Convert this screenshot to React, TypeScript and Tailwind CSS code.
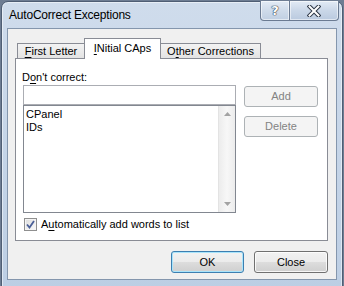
import React from "react";

const CaptionButtons = () => (
  <div className="mr-[3px] -mt-[1px] flex h-[20px]">
    <div className="flex w-[30px] items-center justify-center rounded-bl-[4px] border border-t-0 border-[#6b7b92] bg-gradient-to-b from-[#e3ebf5] via-[#cfdbea] to-[#c0cfe2] shadow-[inset_0_0_0_1px_rgba(255,255,255,0.55)]">
      <span className="font-['DejaVu_Sans',sans-serif] text-[13px] font-bold leading-none text-white [text-shadow:0_0_1px_#2b3544,0_0_1px_#2b3544,0_0_1px_#2b3544]">
        ?
      </span>
    </div>
    <div className="-ml-[1px] flex w-[50px] items-center justify-center rounded-br-[4px] border border-t-0 border-[#6b7b92] bg-gradient-to-b from-[#e3ebf5] via-[#cad7e8] to-[#bacadf] shadow-[inset_0_0_0_1px_rgba(255,255,255,0.55)]">
      <svg width="14" height="12" viewBox="0 0 14 12">
        <path
          d="M2.5 1.5 L11.5 10.5 M11.5 1.5 L2.5 10.5"
          stroke="#2b3544"
          strokeWidth="4"
          strokeLinecap="square"
        />
        <path
          d="M2.5 1.5 L11.5 10.5 M11.5 1.5 L2.5 10.5"
          stroke="#ffffff"
          strokeWidth="2"
          strokeLinecap="square"
        />
      </svg>
    </div>
  </div>
);

const Tab = ({
  label,
  width,
  selected,
}: {
  label: React.ReactNode;
  width: string;
  selected?: boolean;
}) =>
  selected ? (
    <div
      className={`relative z-10 -mb-[1px] -ml-[1px] flex h-[21px] items-start justify-center border border-b-0 border-[#898c95] bg-white pt-[2px] ${width}`}
    >
      {label}
    </div>
  ) : (
    <div
      className={`-ml-[1px] flex h-[15px] items-start justify-center border border-b-0 border-[#898c95] bg-gradient-to-b from-[#f3f3f3] to-[#e3e3e3] first:ml-0 ${width}`}
    >
      {label}
    </div>
  );

const WinButton = ({
  children,
  width,
  disabled,
  isDefault,
}: {
  children: React.ReactNode;
  width: string;
  disabled?: boolean;
  isDefault?: boolean;
}) => {
  if (disabled) {
    return (
      <div
        className={`flex h-[21px] items-center justify-center rounded-[3px] border border-[#adb2b5] bg-[#f4f4f4] text-[#838383] ${width}`}
      >
        {children}
      </div>
    );
  }
  return (
    <div
      className={`flex h-[22px] items-center justify-center rounded-[3px] border bg-[linear-gradient(#f2f2f2_0%,#ebebeb_50%,#dddddd_50%,#cfcfcf_100%)] ${
        isDefault
          ? "border-[#3c7fb1] shadow-[inset_0_0_0_1px_#a9e4fb]"
          : "border-[#707070] shadow-[inset_0_0_0_1px_rgba(255,255,255,0.8)]"
      } ${width}`}
    >
      {children}
    </div>
  );
};

export default function App() {
  return (
    <div className="h-[286px] w-[344px] overflow-hidden bg-[#6e7d93] font-['Liberation_Sans',sans-serif] text-[12px] leading-[15px] text-black">
      <div className="ml-[1px] mt-[1px] h-[292px] w-[342px] rounded-t-[7px] border border-[#4f5e74] bg-gradient-to-b from-[#cfdcec] to-[#bccee4] shadow-[inset_0_0_0_1px_rgba(255,255,255,0.5)]">
        {/* title bar */}
        <div className="flex h-[26px] items-start justify-between">
          <div className="pl-[7px] pt-[6px] text-[12px] tracking-[-0.2px]">AutoCorrect Exceptions</div>
          <CaptionButtons />
        </div>

        {/* client area */}
        <div className="ml-[5px] h-[252px] w-[330px] border border-[#8496ad] bg-[#f0f0f0] text-[11px]">
          {/* tabs */}
          <div className="ml-[9px] mt-[9px] flex h-[20px] items-end">
            <Tab
              width="w-[68px]"
              label={
                <span>
                  <span className="underline underline-offset-2">F</span>irst Letter
                </span>
              }
            />
            <Tab
              selected
              width="w-[77px]"
              label={
                <span>
                  <span className="underline underline-offset-2">I</span>Nitial CAps
                </span>
              }
            />
            <Tab
              width="w-[101px]"
              label={
                <span>
                  O<span className="underline underline-offset-2">t</span>her Corrections
                </span>
              }
            />
          </div>

          {/* tab panel */}
          <div className="ml-[7px] h-[183px] w-[313px] border border-[#898c95] bg-white">
            <div className="pl-[6px] pt-[11px]">
              D<span className="underline underline-offset-2">o</span>n't correct:
            </div>
            <div className="flex gap-[8px] pl-[7px]">
              <div className="flex w-[213px] flex-col">
                <div className="h-[20px] border border-[#abadb3] bg-white" />
                <div className="flex h-[108px] border border-[#828790] bg-white">
                  <div className="flex-1 px-[2px] pt-[2px] leading-[13px]">
                    <div>CPanel</div>
                    <div>IDs</div>
                  </div>
                  <div className="flex w-[17px] flex-col items-center justify-between border-l border-[#e3e3e3] bg-gradient-to-r from-[#ececec] via-[#f7f7f7] to-[#ececec] py-[6px]">
                    <svg width="7" height="4" viewBox="0 0 7 4">
                      <path d="M3.5 0 L7 4 L0 4 Z" fill="#a3a3a3" />
                    </svg>
                    <svg width="7" height="4" viewBox="0 0 7 4">
                      <path d="M0 0 L7 0 L3.5 4 Z" fill="#a3a3a3" />
                    </svg>
                  </div>
                </div>
              </div>
              <div className="mt-[1px] flex flex-col gap-[9px]">
                <WinButton disabled width="w-[74px]">
                  Add
                </WinButton>
                <WinButton disabled width="w-[74px]">
                  Delete
                </WinButton>
              </div>
            </div>
            <div className="mt-[4px] flex items-center gap-[4px] pl-[8px]">
              <div className="flex h-[13px] w-[13px] items-center justify-center border border-[#8f8f8f] bg-gradient-to-br from-[#dcdcdc] to-[#fbfbfb] shadow-[inset_0_0_0_1px_#f4f4f4]">
                <svg width="9" height="9" viewBox="0 0 9 9">
                  <path
                    d="M1 4.5 L3.5 7.5 L8 1"
                    stroke="#4a5f97"
                    strokeWidth="1.8"
                    fill="none"
                  />
                </svg>
              </div>
              <span>
                A<span className="underline underline-offset-2">u</span>tomatically add words to list
              </span>
            </div>
          </div>

          {/* footer buttons */}
          <div className="mt-[10px] flex justify-end gap-[10px] pr-[8px]">
            <WinButton isDefault width="w-[73px]">
              OK
            </WinButton>
            <WinButton width="w-[74px]">Close</WinButton>
          </div>
        </div>
      </div>
    </div>
  );
}
